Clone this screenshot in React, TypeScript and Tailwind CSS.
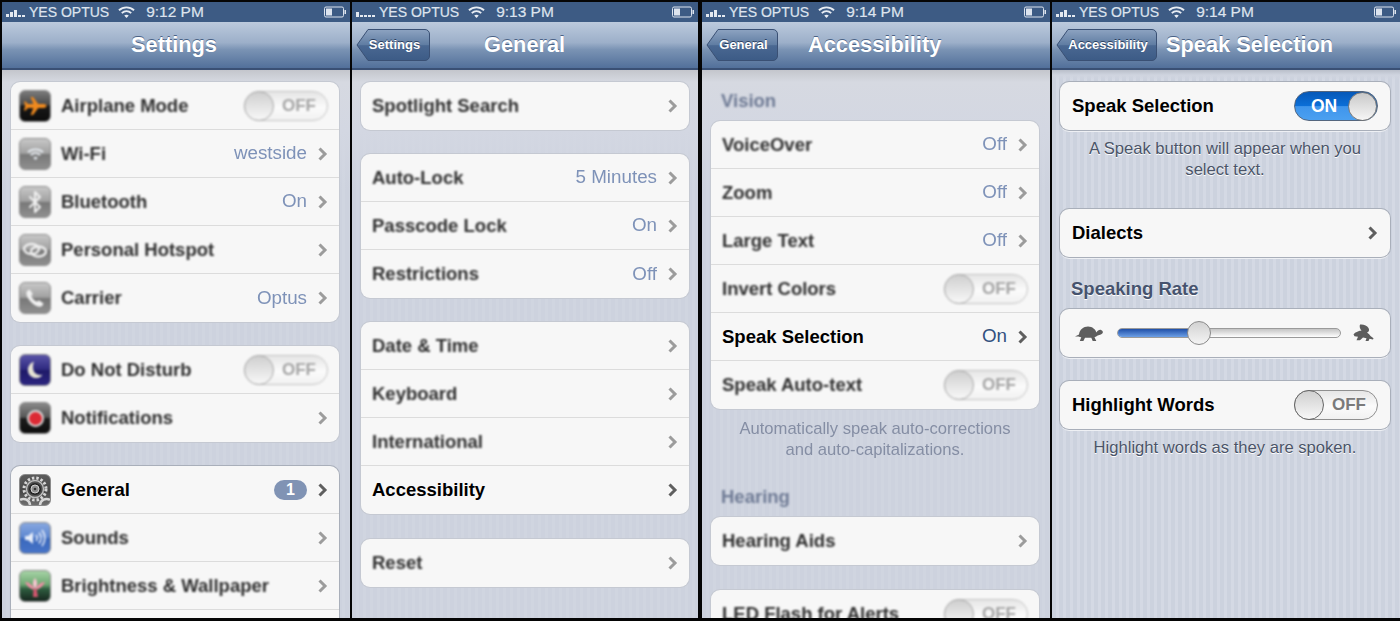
import type { ReactNode } from 'react';
import { Bluetooth } from 'lucide-react';

const soft = 'blur-[1.2px]';
const softBg =
  'bg-[linear-gradient(180deg,#c4c6cc_0,#d6d9e1_12px,#d3d7e2_60px,rgba(205,211,223,0)_120px),repeating-linear-gradient(90deg,#cdd2de_0,#cdd2de_4px,#d0d5e0_4px,#d0d5e0_7px)]';
const sharpBg =
  'bg-[linear-gradient(180deg,#b9bfca_0,#cfd4df_5px,rgba(207,212,223,0)_10px),repeating-linear-gradient(90deg,#ccd2de_0,#ccd2de_4px,#d4d9e4_4px,#d4d9e4_7px)]';

function Signal({ bars }: { bars: string[] }) {
  return (
    <div className="flex h-[10px] w-[23px] items-end gap-[1px]">
      {bars.map((b, i) => (
        <div key={i} className={`w-[3px] bg-[#e4e9f0] ${b}`} />
      ))}
    </div>
  );
}

function WifiGlyph() {
  return (
    <svg width="17" height="14" viewBox="0 0 18 14" fill="none" stroke="#e8edf3" strokeWidth="2">
      <path d="M1 5.2C5.6 1 12.4 1 17 5.2" />
      <path d="M4 8.2C6.9 5.6 11.1 5.6 14 8.2" />
      <path d="M9 13.4 6.6 10.8C8 9.7 10 9.7 11.4 10.8Z" fill="#e8edf3" stroke="none" />
    </svg>
  );
}

function StatusBar({ time, bars }: { time: string; bars: string[] }) {
  return (
    <div className="flex h-[20px] items-center bg-[#3d5b84] pl-[4px] text-[14px] leading-none text-[#dde4ee] [-webkit-text-stroke:0.2px_#dde4ee]">
      <Signal bars={bars} />
      <span>YES OPTUS</span>
      <span className="ml-[9px]">
        <WifiGlyph />
      </span>
      <span className="ml-[11px] text-[15.5px]">{time}</span>
      <svg className="ml-auto mr-[3px]" width="23" height="12" viewBox="0 0 23 12" fill="none">
        <rect x="0.5" y="1" width="19" height="10" rx="1.5" stroke="#dde4ee" />
        <rect x="2" y="2.5" width="6" height="7" fill="#dde4ee" />
        <path d="M20.5 4h1.5v4h-1.5z" fill="#dde4ee" />
      </svg>
    </div>
  );
}

type BackProps = { label: string; width: number; widthClass: string };

function BackButton({ label, width, widthClass }: BackProps) {
  const id = `back-${label}`;
  return (
    <div className={`relative ml-[4px] flex h-[32px] shrink-0 items-center justify-center pl-[3px] ${widthClass}`}>
      <svg className="absolute inset-0" width={width} height="32" viewBox={`0 0 ${width} 32`}>
        <defs>
          <linearGradient id={id} x1="0" y1="0" x2="0" y2="1">
            <stop offset="0" stopColor="#8da3c1" />
            <stop offset="0.5" stopColor="#5f7ca2" />
            <stop offset="0.52" stopColor="#4a6892" />
            <stop offset="1" stopColor="#3c5b86" />
          </linearGradient>
        </defs>
        <path
          d={`M12 .5H${width - 5}a4.5 4.5 0 0 1 4.5 4.5v22a4.5 4.5 0 0 1-4.5 4.5H12L1 16Z`}
          fill={`url(#${id})`}
          stroke="#3a5074"
        />
      </svg>
      <span className="relative text-[13px] font-bold text-white [text-shadow:0_-1px_0_#2c405f]">{label}</span>
    </div>
  );
}

function NavBar({ title, titleClass, back }: { title: string; titleClass: string; back?: BackProps }) {
  return (
    <div className="flex h-[48px] items-center border-b-2 border-[#3a5074] bg-[linear-gradient(180deg,#bccadd_0,#9cafc9_45%,#7a93b4_60%,#52709a_100%)]">
      {back && <BackButton {...back} />}
      <span className={`text-[21.8px] font-bold whitespace-nowrap text-white [text-shadow:0_-1px_0_#4a6285] ${titleClass}`}>
        {title}
      </span>
    </div>
  );
}

function Chevron({ sharp }: { sharp?: boolean }) {
  return (
    <svg
      className={`ml-[11px] shrink-0 ${sharp ? '' : 'blur-[0.5px]'}`}
      width="10"
      height="14"
      viewBox="0 0 10 14"
      fill="none"
      stroke={sharp ? '#5f5f5f' : '#9c9c9c'}
      strokeWidth="3"
    >
      <path d="M1.5 1.5 7 7l-5.5 5.5" />
    </svg>
  );
}

function Toggle({ on, sharp }: { on?: boolean; sharp?: boolean }) {
  if (on) {
    return (
      <div className="flex h-[30px] w-[84px] items-center justify-between rounded-full border border-[#54667e] bg-[linear-gradient(180deg,#0658b8_0,#0b6fd8_50%,#3f95ec_52%,#4ba0f0_100%)] pl-[16px]">
        <span className="text-[17.5px] font-bold text-white">ON</span>
        <div className="h-[29px] w-[29px] rounded-full border border-[#777] bg-[linear-gradient(180deg,#c9c9c9,#f6f6f6)]" />
      </div>
    );
  }
  return (
    <div
      className={`flex h-[30px] w-[84px] items-center rounded-full border bg-[linear-gradient(180deg,#e6e6e6_0,#fbfbfb_55%,#f1f1f1_100%)] ${
        sharp ? 'border-[#8f8f8f]' : 'border-[#c4c4c4] blur-[0.8px]'
      }`}
    >
      <div
        className={`-ml-px h-[30px] w-[30px] rounded-full border bg-[linear-gradient(180deg,#cfcfcf,#f8f8f8)] ${
          sharp ? 'border-[#666]' : 'border-[#a8a8a8]'
        }`}
      />
      <span className={`ml-[8px] text-[17px] font-bold ${sharp ? 'text-[#7a7a7a]' : 'text-[#a4a4a4]'}`}>OFF</span>
    </div>
  );
}

function Tile({ tone, children }: { tone: string; children: ReactNode }) {
  return (
    <div className={`-ml-[3px] mr-[10px] flex h-[32px] w-[32px] shrink-0 items-center justify-center overflow-hidden rounded-[6px] border border-[#8b8b8b] ${tone}`}>
      {children}
    </div>
  );
}

const grayTile = 'bg-[linear-gradient(180deg,#c8c8c8_0,#a0a0a0_48%,#787878_52%,#8f8f8f_100%)]';

const icons = {
  airplane: (
    <Tile tone="bg-[linear-gradient(180deg,#7c7c7c_0,#4a4a4a_45%,#191919_50%,#0c0c0c_100%)]">
      <svg width="26" height="20" viewBox="0 0 26 20" fill="#f08a1e">
        <path d="M24.5 10c0-1.2-1.4-1.9-3-1.9h-5.3L11 1H8.6l2.8 7.1H5.8L3.7 5.6H2l1.2 4.4L2 14.4h1.7l2.1-2.5h5.6L8.6 19H11l5.2-7.1h5.300c1.600 0 3-.7 3-1.900Z" />
      </svg>
    </Tile>
  ),
  wifi: (
    <Tile tone={grayTile}>
      <WifiGlyph />
    </Tile>
  ),
  bluetooth: (
    <Tile tone={grayTile}>
      <Bluetooth size={24} color="#f1f1f1" strokeWidth={2} />
    </Tile>
  ),
  hotspot: (
    <Tile tone={grayTile}>
      <svg width="26" height="18" viewBox="0 0 26 18" fill="none" stroke="#efefef" strokeWidth="2.4">
        <ellipse cx="9.5" cy="8" rx="7.5" ry="5" />
        <ellipse cx="16.5" cy="10.5" rx="7.5" ry="5" />
      </svg>
    </Tile>
  ),
  carrier: (
    <Tile tone={grayTile}>
      <svg width="22" height="22" viewBox="0 0 22 22" fill="#f1f1f1">
        <path d="M5.6 2.4 8.8 7 7.2 9c.8 2.2 3.4 4.9 5.7 5.8l2-1.6 4.6 3.200c-.6 2.200-2.300 3.600-4.300 3.300C9.700 18.800 3.200 12.300 2.400 6.700 2.100 4.700 3.400 3 5.600 2.400Z" />
      </svg>
    </Tile>
  ),
  dnd: (
    <Tile tone="bg-[linear-gradient(180deg,#5a54a8_0,#2f2a80_48%,#1f1a68_52%,#2c2580_100%)]">
      <svg width="20" height="20" viewBox="0 0 20 20" fill="#e7e4d4">
        <path d="M9 1.5C5 3 2.5 6.5 3 11c.5 4.300 4.500 7.500 9 7 2.400-.3 4.300-1.400 5.500-3.300-4.500 1-8.300-1.200-9.200-5C7.700 7 8 3.800 9 1.500Z" />
      </svg>
    </Tile>
  ),
  notifications: (
    <Tile tone="bg-[linear-gradient(180deg,#8a8a8a_0,#555_48%,#1c1c1c_52%,#0e0e0e_100%)]">
      <div className="h-[17px] w-[17px] rounded-full border-2 border-[#d8d8d8] bg-[#dc2a34]" />
    </Tile>
  ),
  general: (
    <Tile tone="bg-[linear-gradient(180deg,#5c5c5c_0,#474747_55%,#6f6f6f_100%)]">
      <svg width="30" height="30" viewBox="0 0 30 30" fill="none">
        <circle cx="15" cy="14" r="11" stroke="#d6d6d6" strokeWidth="3" strokeDasharray="2.4 2" />
        <circle cx="15" cy="14" r="8.5" stroke="#bdbdbd" strokeWidth="1.5" />
        <circle cx="15" cy="14" r="6" fill="#262626" />
        <circle cx="15" cy="14" r="4" fill="#8f8f8f" stroke="#cfcfcf" />
        <circle cx="15" cy="14" r="1.3" fill="#333" />
        <path d="M0 25a6.5 6.5 0 0 1 10 5M30 25a6.5 6.5 0 0 0-10 5" stroke="#d6d6d6" strokeWidth="2.5" />
      </svg>
    </Tile>
  ),
  sounds: (
    <Tile tone="bg-[linear-gradient(180deg,#88a8e0_0,#5c86d0_48%,#3a68bc_52%,#4774c8_100%)]">
      <svg width="24" height="20" viewBox="0 0 24 20" fill="none" stroke="#e8eefa" strokeWidth="1.6">
        <path d="M2 8h3l5-4v12l-5-4H2Z" fill="#e8eefa" stroke="none" />
        <path d="M13 7c1.4 1.8 1.4 4.2 0 6M16 4.500c2.700 3.300 2.700 7.700 0 11M19 2c3.800 4.800 3.800 11.200 0 16" />
      </svg>
    </Tile>
  ),
  brightness: (
    <Tile tone="bg-[linear-gradient(180deg,#a7d4a6_0,#6ea873_45%,#2e5c3f_60%,#16261e_100%)]">
      <svg width="28" height="24" viewBox="0 0 28 24" fill="#ee8fa5">
        <path d="M14 4c2.5 3 3 7 0 11-3-4-2.5-8 0-11Z" fill="#f7c6d1" />
        <path d="M14 16C9 15 6 12 4 8c4 0 8 3 10 8ZM14 16c5-1 8-4 10-8-4 0-8 3-10 8Z" />
        <path d="M12.5 15h3l1.5 8h-5Z" fill="#d4566f" />
      </svg>
    </Tile>
  ),
};

type RowProps = {
  label?: string;
  icon?: ReactNode;
  value?: string;
  sharp?: boolean;
  toggle?: boolean;
  badge?: string;
  chevron?: boolean;
};

function Row({ label, icon, value, sharp, toggle, badge, chevron = !toggle }: RowProps) {
  return (
    <div className="flex h-[48px] items-center border-b border-[#dcdcdc] pr-[11px] pl-[11px] last:border-b-0">
      {icon && <div className={sharp ? '' : soft}>{icon}</div>}
      <span className={`text-[18.5px] font-bold ${sharp ? 'text-black' : `text-[#2e2e2e] ${soft}`}`}>{label}</span>
      <div className="ml-auto flex items-center">
        {value && (
          <span className={`text-[18.8px] ${sharp ? 'text-[#31507f]' : 'text-[#7e92b8] blur-[0.7px]'}`}>{value}</span>
        )}
        {badge && (
          <div className="flex h-[20px] w-[33px] items-center justify-center rounded-full bg-[#8093b4] text-[16px] font-bold text-white">
            {badge}
          </div>
        )}
        {toggle && <Toggle sharp={sharp} />}
        {chevron && <Chevron sharp={sharp} />}
      </div>
    </div>
  );
}

function Group({ sharp, className = '', children }: { sharp?: boolean; className?: string; children: ReactNode }) {
  return (
    <div
      className={`overflow-hidden rounded-[9px] bg-[#f7f7f7] ${
        sharp ? 'shadow-[0_0_0_1px_#a9afba,0_2px_0_#eef0f4]' : 'shadow-[0_0_0_1px_#c5c9d2]'
      } ${className}`}
    >
      {children}
    </div>
  );
}

function SectionLabel({ text, sharp, className = '' }: { text: string; sharp?: boolean; className?: string }) {
  return (
    <div
      className={`mb-[10px] h-[21px] text-[18.5px] leading-[21px] font-bold ${
        sharp ? 'text-[#46536e] [text-shadow:0_1px_0_#fff]' : `text-[#6f7b95] ${soft}`
      } ${className}`}
    >
      {text}
    </div>
  );
}

function Footnote({ lines, sharp, className = '' }: { lines: string[]; sharp?: boolean; className?: string }) {
  return (
    <div
      className={`text-center text-[16.6px] leading-[21px] ${
        sharp ? 'text-[#4a5468] [text-shadow:0_1px_0_#fff]' : 'text-[#858ea4] blur-[0.7px]'
      } ${className}`}
    >
      {lines.map((l) => (
        <div key={l}>{l}</div>
      ))}
    </div>
  );
}

function Turtle() {
  return (
    <svg width="30" height="20" viewBox="0 0 30 20" fill="#5d5d5d">
      <path d="M1 13.5 5 11.5C5.500 6.500 9.500 3.500 14 3.500s7.500 3 8.500 6c1-2 3-3 4.500-2.500 1.500.4 2.300 1.700 1.700 3-.6 1.200-2.700 1.800-5 2.500-1 .9-2 1.500-3.200 1.800l1.800 3.700h-3.600l-1.400-3.200H11l-1.600 3.200H5.800l1.500-3.800c-1 0-2-.2-2.800-.6L1 13.500Z" />
    </svg>
  );
}

function Rabbit() {
  return (
    <svg width="22" height="20" viewBox="0 0 22 20" fill="#5d5d5d">
      <path d="M7 1.500c3.500-.5 7 1 8.500 3.500 1 1.700.6 3.500-.8 4.200-1 .5-2.200.3-3.200-.4 2.500.6 4.700 2 6 4.200l3 2.300-.5 1.200-3.500-.7-1 2.200h-3l1-2.800-3.500-.7-3 2.700H3.500l1.500-3.500-3.500-.5L.5 11.500l1.500-1.800 4-1.700c1-.3 1.700-.3 2.500-.2C7 6 6.200 3.500 7 1.500Z" />
    </svg>
  );
}

const barsA = ['h-[3px]', 'h-[5px]', 'h-[7px]', 'h-[2px]', 'h-[2px]'];
const barsB = ['h-[5px]', 'h-[2px]', 'h-[2px]', 'h-[2px]', 'h-[2px]'];

export default function App() {
  return (
    <div className="flex h-[621px] w-[1400px] gap-[2px] overflow-hidden bg-[#050505] pt-[2px] pb-[3px] pl-[2px] font-['Liberation_Sans',Arial,sans-serif]">
      {/* Settings */}
      <section className="flex w-[348px] flex-col">
        <StatusBar time="9:12 PM" bars={barsA} />
        <NavBar title="Settings" titleClass="ml-[129px]" />
        <div className={`flex-1 overflow-hidden pt-[12px] pr-[11px] pl-[9px] ${softBg}`}>
          <Group>
            <Row label="Airplane Mode" icon={icons.airplane} toggle />
            <Row label="Wi-Fi" icon={icons.wifi} value="westside" />
            <Row label="Bluetooth" icon={icons.bluetooth} value="On" />
            <Row label="Personal Hotspot" icon={icons.hotspot} />
            <Row label="Carrier" icon={icons.carrier} value="Optus" />
          </Group>
          <Group className="mt-[24px]">
            <Row label="Do Not Disturb" icon={icons.dnd} toggle />
            <Row label="Notifications" icon={icons.notifications} />
          </Group>
          <Group sharp className="mt-[24px]">
            <Row label="General" icon={icons.general} badge="1" sharp />
            <Row label="Sounds" icon={icons.sounds} />
            <Row label="Brightness & Wallpaper" icon={icons.brightness} />
            <div className="h-[48px]" />
          </Group>
        </div>
      </section>

      {/* General */}
      <section className="mr-[2px] flex w-[346px] flex-col">
        <StatusBar time="9:13 PM" bars={barsB} />
        <NavBar
          title="General"
          titleClass="ml-[54px]"
          back={{ label: 'Settings', width: 74, widthClass: 'w-[74px]' }}
        />
        <div className={`flex-1 overflow-hidden pt-[12px] pr-[9px] pl-[9px] ${softBg}`}>
          <Group>
            <Row label="Spotlight Search" />
          </Group>
          <Group className="mt-[24px]">
            <Row label="Auto-Lock" value="5 Minutes" />
            <Row label="Passcode Lock" value="On" />
            <Row label="Restrictions" value="Off" />
          </Group>
          <Group className="mt-[24px]">
            <Row label="Date & Time" />
            <Row label="Keyboard" />
            <Row label="International" />
            <Row label="Accessibility" sharp />
          </Group>
          <Group className="mt-[25px]">
            <Row label="Reset" />
          </Group>
        </div>
      </section>

      {/* Accessibility */}
      <section className="flex w-[348px] flex-col">
        <StatusBar time="9:14 PM" bars={barsA} />
        <NavBar
          title="Accessibility"
          titleClass="ml-[30px]"
          back={{ label: 'General', width: 72, widthClass: 'w-[72px]' }}
        />
        <div className={`flex-1 overflow-hidden pt-[20px] pr-[11px] pl-[9px] ${softBg}`}>
          <SectionLabel text="Vision" className="ml-[10px]" />
          <Group>
            <Row label="VoiceOver" value="Off" />
            <Row label="Zoom" value="Off" />
            <Row label="Large Text" value="Off" />
            <Row label="Invert Colors" toggle />
            <Row label="Speak Selection" value="On" sharp />
            <Row label="Speak Auto-text" toggle />
          </Group>
          <Footnote className="mt-[9px]" lines={['Automatically speak auto-corrections', 'and auto-capitalizations.']} />
          <SectionLabel text="Hearing" className="mt-[26px] ml-[10px]" />
          <Group>
            <Row label="Hearing Aids" />
          </Group>
          <Group className="mt-[25px]">
            <Row label="LED Flash for Alerts" toggle />
          </Group>
        </div>
      </section>

      {/* Speak Selection */}
      <section className="flex w-[348px] flex-col">
        <StatusBar time="9:14 PM" bars={barsA} />
        <NavBar
          title="Speak Selection"
          titleClass="ml-[9px]"
          back={{ label: 'Accessibility', width: 101, widthClass: 'w-[101px]' }}
        />
        <div className={`flex-1 overflow-hidden pt-[12px] pr-[10px] pl-[8px] ${sharpBg}`}>
          <Group sharp>
            <div className="flex h-[48px] items-center justify-between px-[12px]">
              <span className="text-[18.5px] font-bold text-black">Speak Selection</span>
              <Toggle on sharp />
            </div>
          </Group>
          <Footnote sharp className="mt-[8px]" lines={['A Speak button will appear when you', 'select text.']} />
          <Group sharp className="mt-[29px]">
            <div className="flex h-[48px] items-center justify-between px-[12px]">
              <span className="text-[18.5px] font-bold text-black">Dialects</span>
              <Chevron sharp />
            </div>
          </Group>
          <SectionLabel sharp text="Speaking Rate" className="mt-[21px] ml-[11px]" />
          <Group sharp>
            <div className="flex h-[48px] items-center pl-[14px]">
              <Turtle />
              <div className="relative ml-[13px] h-[10px] w-[224px] rounded-full border border-[#9a9a9a] bg-[linear-gradient(180deg,#c4c4c4,#fff)]">
                <div className="h-full w-[80px] rounded-l-full bg-[linear-gradient(180deg,#1f4fa8,#6da0e6)]" />
                <div className="absolute top-[-8px] left-[69px] h-[24px] w-[24px] rounded-full border border-[#8a8a8a] bg-[linear-gradient(180deg,#d2d2d2,#f4f4f4)]" />
              </div>
              <div className="ml-[12px]">
                <Rabbit />
              </div>
            </div>
          </Group>
          <Group sharp className="mt-[24px]">
            <div className="flex h-[48px] items-center justify-between px-[12px]">
              <span className="text-[18.5px] font-bold text-black">Highlight Words</span>
              <Toggle sharp />
            </div>
          </Group>
          <Footnote sharp className="mt-[8px]" lines={['Highlight words as they are spoken.']} />
        </div>
      </section>
    </div>
  );
}
